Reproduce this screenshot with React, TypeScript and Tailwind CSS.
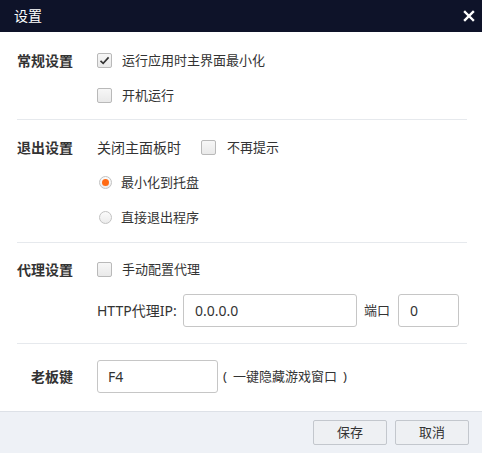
import React from "react";

const font = {
  fontFamily: '"Noto Sans", "Noto Sans CJK SC", sans-serif',
};

const CheckBox = ({ checked = false }: { checked?: boolean }) => (
  <span className="flex h-[15px] w-[15px] shrink-0 items-center justify-center rounded-[2px] border border-[#b9b9b9] bg-gradient-to-b from-[#f7f7f7] to-[#e9e9e9]">
    {checked && (
      <svg width="11" height="11" viewBox="0 0 11 11" aria-hidden="true">
        <path d="M1.5 5.8 L4.2 8.4 L9.6 2.4" fill="none" stroke="#333" strokeWidth="1.6" />
      </svg>
    )}
  </span>
);

const Radio = ({ checked = false }: { checked?: boolean }) => (
  <span className="flex h-[13px] w-[13px] shrink-0 items-center justify-center rounded-full border border-[#c2c2c2] bg-gradient-to-b from-[#fbfbfb] to-[#ececec]">
    {checked && <span className="h-[7px] w-[7px] rounded-full bg-[#ff6a13]" />}
  </span>
);

const Label = ({ children }: { children: React.ReactNode }) => (
  <div className="w-[56px] shrink-0 text-right text-[14px] font-bold leading-[20px] text-[#333]">
    {children}
  </div>
);

const Divider = () => <div className="h-px bg-[#e6e9ed]" />;

export default function App() {
  return (
    <div className="flex h-[453px] w-[482px] flex-col bg-white text-[13px] text-[#333]" style={font}>
      {/* Title bar */}
      <div className="flex h-[32px] shrink-0 items-center justify-between bg-[#0e1329] pl-[14px] pr-[5px]">
        <span className="text-[14px] leading-none text-white">设置</span>
        <svg width="12" height="12" viewBox="0 0 12 12" className="mr-[2px]" aria-hidden="true">
          <path d="M2 2 L10 10 M10 2 L2 10" stroke="#fff" strokeWidth="2.4" strokeLinecap="square" />
        </svg>
      </div>

      <div className="flex-1 pl-[17px] pr-[15px]">
        {/* 常规设置 */}
        <div className="flex pt-[11px] pb-[6px]">
          <div className="flex h-[35px] items-center">
            <Label>常规设置</Label>
          </div>
          <div className="ml-[24px] flex flex-col">
            <div className="flex h-[35px] items-center gap-[10px]">
              <CheckBox checked />
              <span>运行应用时主界面最小化</span>
            </div>
            <div className="flex h-[35px] items-center gap-[10px]">
              <CheckBox />
              <span>开机运行</span>
            </div>
          </div>
        </div>
        <Divider />

        {/* 退出设置 */}
        <div className="flex pt-[10px] pb-[7px]">
          <div className="flex h-[35px] items-center">
            <Label>退出设置</Label>
          </div>
          <div className="ml-[24px] flex flex-col">
            <div className="flex h-[35px] items-center">
              <span className="text-[14px]">关闭主面板时</span>
              <span className="ml-[20px]">
                <CheckBox />
              </span>
              <span className="ml-[11px]">不再提示</span>
            </div>
            <div className="flex h-[35px] items-center gap-[9px] pl-[2px]">
              <Radio checked />
              <span>最小化到托盘</span>
            </div>
            <div className="flex h-[35px] items-center gap-[9px] pl-[2px]">
              <Radio />
              <span>直接退出程序</span>
            </div>
          </div>
        </div>
        <Divider />

        {/* 代理设置 */}
        <div className="flex pt-[9px] pb-[16px]">
          <div className="flex h-[35px] items-center">
            <Label>代理设置</Label>
          </div>
          <div className="ml-[24px] flex flex-col">
            <div className="flex h-[35px] items-center gap-[10px]">
              <CheckBox />
              <span>手动配置代理</span>
            </div>
            <div className="mt-[7px] flex items-center">
              <span className="w-[86px] text-[14px]">HTTP代理IP:</span>
              <div className="flex h-[33px] w-[174px] items-center rounded-[3px] border border-[#c6c6c6] px-[11px] text-[14px]">
                0.0.0.0
              </div>
              <span className="ml-[7px]">端口</span>
              <div className="ml-[8px] flex h-[33px] w-[61px] items-center rounded-[3px] border border-[#c6c6c6] px-[11px] text-[14px]">
                0
              </div>
            </div>
          </div>
        </div>
        <Divider />

        {/* 老板键 */}
        <div className="flex items-center pt-[16px] pb-[16px]">
          <Label>老板键</Label>
          <div className="ml-[24px] flex h-[33px] w-[121px] items-center rounded-[3px] border border-[#c6c6c6] px-[10px] text-[14px]">
            F4
          </div>
          <span className="ml-[5px]">(</span>
          <span className="ml-[6px]">一键隐藏游戏窗口</span>
          <span className="ml-[6px]">)</span>
        </div>
      </div>

      {/* Footer */}
      <div className="flex h-[42px] shrink-0 items-center justify-end gap-[8px] border-t border-[#dde1e7] bg-[#eef1f6] pr-[13px]">
        <button className="h-[25px] w-[74px] rounded-[2px] border border-[#c3c7cd] bg-[#eef0f3] text-[13px] text-[#333]">
          保存
        </button>
        <button className="h-[25px] w-[74px] rounded-[2px] border border-[#c3c7cd] bg-[#eef0f3] text-[13px] text-[#333]">
          取消
        </button>
      </div>
    </div>
  );
}
